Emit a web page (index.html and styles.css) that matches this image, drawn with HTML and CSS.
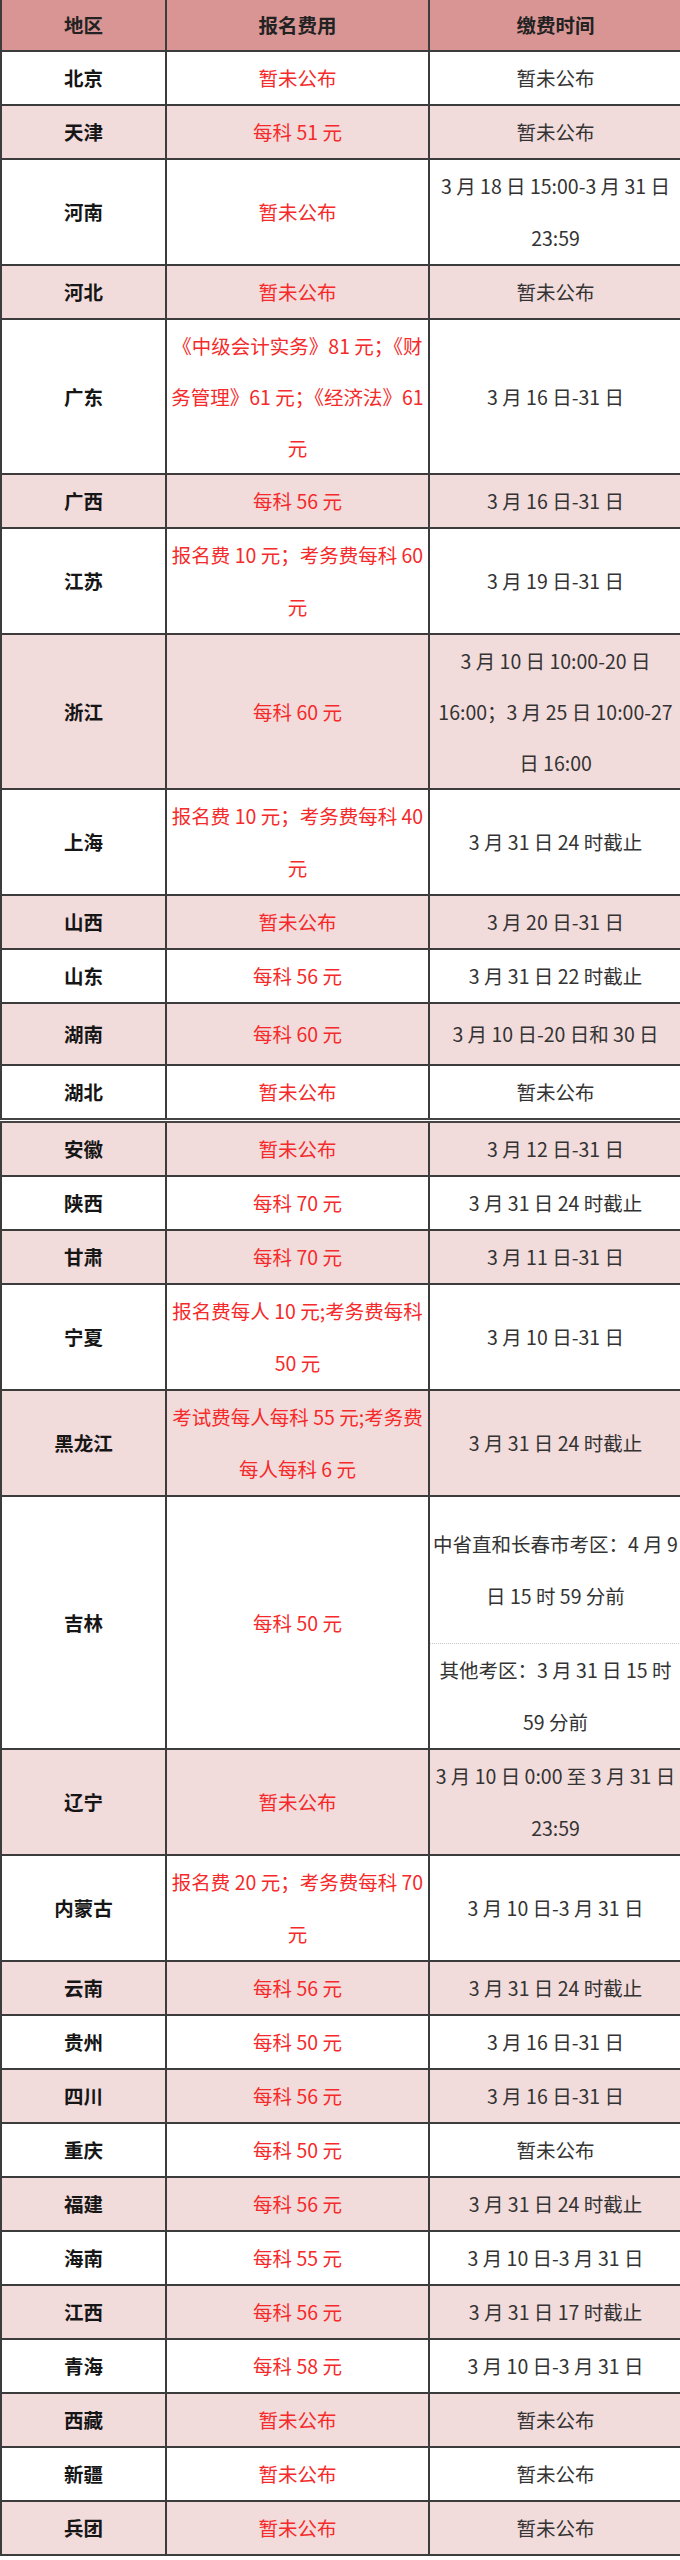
FILE: index.html
```html
<!DOCTYPE html>
<html lang="zh-CN">
<head>
<meta charset="utf-8">
<title>报名费用与缴费时间</title>
<link rel="stylesheet" href="styles.css">
</head>
<body>
<table class="fee-table">
  <colgroup>
    <col class="c-region">
    <col class="c-fee">
    <col class="c-time">
  </colgroup>
  <thead>
    <tr class="head"><th>地区</th><th>报名费用</th><th>缴费时间</th></tr>
  </thead>
  <tbody>
    <tr><td class="rg">北京</td><td class="fee">暂未公布</td><td class="tm">暂未公布</td></tr>
    <tr class="alt"><td class="rg">天津</td><td class="fee">每科 51 元</td><td class="tm">暂未公布</td></tr>
    <tr><td class="rg">河南</td><td class="fee">暂未公布</td><td class="tm">3 月 18 日 15:00-3 月 31 日<br>23:59</td></tr>
    <tr class="alt"><td class="rg">河北</td><td class="fee">暂未公布</td><td class="tm">暂未公布</td></tr>
    <tr class="tri"><td class="rg">广东</td><td class="fee">《中级会计实务》81 元；《财<br>务管理》61 元；《经济法》61<br>元</td><td class="tm">3 月 16 日-31 日</td></tr>
    <tr class="alt"><td class="rg">广西</td><td class="fee">每科 56 元</td><td class="tm">3 月 16 日-31 日</td></tr>
    <tr><td class="rg">江苏</td><td class="fee">报名费 10 元；考务费每科 60<br>元</td><td class="tm">3 月 19 日-31 日</td></tr>
    <tr class="alt tri"><td class="rg">浙江</td><td class="fee">每科 60 元</td><td class="tm">3 月 10 日 10:00-20 日<br>16:00；3 月 25 日 10:00-27<br>日 16:00</td></tr>
    <tr><td class="rg">上海</td><td class="fee">报名费 10 元；考务费每科 40<br>元</td><td class="tm">3 月 31 日 24 时截止</td></tr>
    <tr class="alt"><td class="rg">山西</td><td class="fee">暂未公布</td><td class="tm">3 月 20 日-31 日</td></tr>
    <tr><td class="rg">山东</td><td class="fee">每科 56 元</td><td class="tm">3 月 31 日 22 时截止</td></tr>
    <tr class="alt tall"><td class="rg">湖南</td><td class="fee">每科 60 元</td><td class="tm">3 月 10 日-20 日和 30 日</td></tr>
    <tr><td class="rg">湖北</td><td class="fee">暂未公布</td><td class="tm">暂未公布</td></tr>
    <tr class="alt split"><td class="rg">安徽</td><td class="fee">暂未公布</td><td class="tm">3 月 12 日-31 日</td></tr>
    <tr><td class="rg">陕西</td><td class="fee">每科 70 元</td><td class="tm">3 月 31 日 24 时截止</td></tr>
    <tr class="alt"><td class="rg">甘肃</td><td class="fee">每科 70 元</td><td class="tm">3 月 11 日-31 日</td></tr>
    <tr><td class="rg">宁夏</td><td class="fee">报名费每人 10 元;考务费每科<br>50 元</td><td class="tm">3 月 10 日-31 日</td></tr>
    <tr class="alt"><td class="rg">黑龙江</td><td class="fee">考试费每人每科 55 元;考务费<br>每人每科 6 元</td><td class="tm">3 月 31 日 24 时截止</td></tr>
    <tr class="jl-top"><td class="rg" rowspan="2">吉林</td><td class="fee" rowspan="2">每科 50 元</td><td class="tm sub-a">中省直和长春市考区：4 月 9<br>日 15 时 59 分前</td></tr>
    <tr class="jl-bottom"><td class="tm sub-b">其他考区：3 月 31 日 15 时<br>59 分前</td></tr>
    <tr class="alt"><td class="rg">辽宁</td><td class="fee">暂未公布</td><td class="tm">3 月 10 日 0:00 至 3 月 31 日<br>23:59</td></tr>
    <tr><td class="rg">内蒙古</td><td class="fee">报名费 20 元；考务费每科 70<br>元</td><td class="tm">3 月 10 日-3 月 31 日</td></tr>
    <tr class="alt"><td class="rg">云南</td><td class="fee">每科 56 元</td><td class="tm">3 月 31 日 24 时截止</td></tr>
    <tr><td class="rg">贵州</td><td class="fee">每科 50 元</td><td class="tm">3 月 16 日-31 日</td></tr>
    <tr class="alt"><td class="rg">四川</td><td class="fee">每科 56 元</td><td class="tm">3 月 16 日-31 日</td></tr>
    <tr><td class="rg">重庆</td><td class="fee">每科 50 元</td><td class="tm">暂未公布</td></tr>
    <tr class="alt"><td class="rg">福建</td><td class="fee">每科 56 元</td><td class="tm">3 月 31 日 24 时截止</td></tr>
    <tr><td class="rg">海南</td><td class="fee">每科 55 元</td><td class="tm">3 月 10 日-3 月 31 日</td></tr>
    <tr class="alt"><td class="rg">江西</td><td class="fee">每科 56 元</td><td class="tm">3 月 31 日 17 时截止</td></tr>
    <tr><td class="rg">青海</td><td class="fee">每科 58 元</td><td class="tm">3 月 10 日-3 月 31 日</td></tr>
    <tr class="alt"><td class="rg">西藏</td><td class="fee">暂未公布</td><td class="tm">暂未公布</td></tr>
    <tr><td class="rg">新疆</td><td class="fee">暂未公布</td><td class="tm">暂未公布</td></tr>
    <tr class="alt"><td class="rg">兵团</td><td class="fee">暂未公布</td><td class="tm">暂未公布</td></tr>
  </tbody>
</table>
</body>
</html>
```

FILE: styles.css
```css
html, body {
  margin: 0;
  padding: 0;
  background: #ffffff;
  overflow-x: hidden;
}

body {
  font-family: "Noto Sans CJK SC", "Noto Sans", sans-serif;
  font-size: 19.5px;
  color: #333333;
}

.fee-table {
  width: 680px;
  table-layout: fixed;
  border-collapse: collapse;
}

.c-region { width: 165px; }
.c-fee { width: 263px; }
.c-time { width: 252px; }

.fee-table th,
.fee-table td {
  border: 2px solid #3c3c3c;
  padding: 0;
  text-align: center;
  vertical-align: middle;
  line-height: 52px;
  white-space: nowrap;
  overflow: visible;
}

.fee-table th:last-child,
.fee-table td.tm {
  border-right: none;
}

.head th {
  border-top: none;
  background: #d99594;
  color: #222222;
  font-weight: 700;
  height: 50px;
  line-height: 50px;
}

.alt td {
  background: #f2dbdb;
}

.rg {
  font-weight: 700;
  color: #161616;
}

.fee {
  color: #f52a2a;
}

.tm {
  color: #333333;
}

.tri td {
  line-height: 51px;
}

.tall td {
  height: 60px;
}

.split td {
  border-top: 5px double #444444;
}

.fee-table td.sub-a {
  padding: 21px 0;
  border-bottom: 1px dotted #c8c8c8;
}

.fee-table td.sub-b {
  border-top: 1px dotted #c8c8c8;
}
```
